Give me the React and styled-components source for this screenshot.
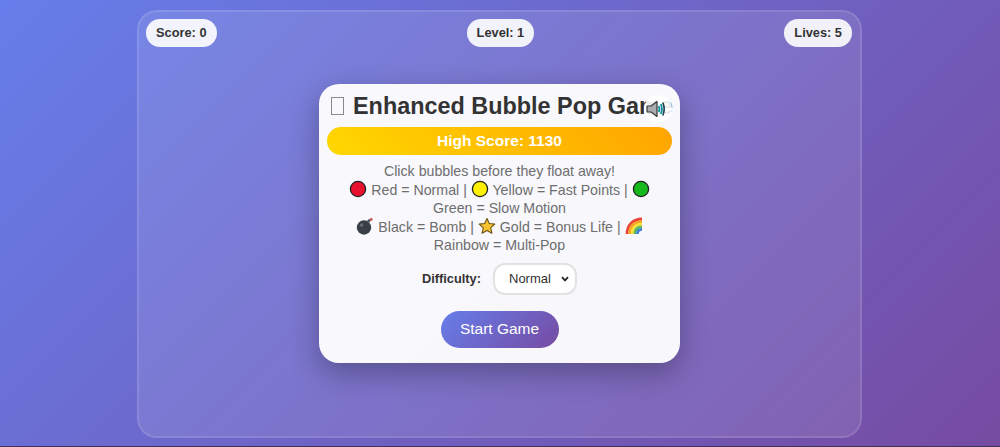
import React from "react";
import styled, { createGlobalStyle } from "styled-components";

const GlobalStyle = createGlobalStyle`
  html, body, #root {
    margin: 0;
    height: 100%;
  }
  body {
    font-family: "Liberation Sans", Arial, sans-serif;
    overflow: hidden;
  }
`;

const Page = styled.div`
  height: 447px;
  box-sizing: border-box;
  display: flex;
  justify-content: center;
  align-items: flex-start;
  padding-top: 10px;
  padding-right: 1px;
  background: linear-gradient(135deg, #667eea 0%, #764ba2 100%);
  border-bottom: 1px solid #3a3560;
`;

const GameArea = styled.div`
  position: relative;
  width: 725px;
  height: 428px;
  box-sizing: border-box;
  display: flex;
  align-items: center;
  justify-content: center;
  padding-bottom: 1px;
  background: rgba(255, 255, 255, 0.1);
  background-clip: padding-box;
  border: 2px solid rgba(255, 255, 255, 0.2);
  border-radius: 20px;
`;

const Hud = styled.div`
  position: absolute;
  top: 7px;
  left: 7px;
  right: 8px;
  display: flex;
  justify-content: space-between;
`;

const Pill = styled.div`
  padding: 7px 10px;
  height: 28px;
  box-sizing: border-box;
  background: rgba(255, 255, 255, 0.9);
  border-radius: 20px;
  font-size: 12.8px;
  line-height: 14px;
  font-weight: 700;
  color: #333;
`;

const Menu = styled.div`
  position: relative;
  width: 361px;
  height: 279px;
  box-sizing: border-box;
  padding: 8px 8px 16px;
  background: rgba(255, 255, 255, 0.95);
  border-radius: 20px;
  box-shadow: 0 10px 30px rgba(0, 0, 0, 0.3);
  text-align: center;
`;

const Title = styled.h1`
  margin: 0 0 0 4px;
  display: flex;
  align-items: center;
  gap: 9px;
  height: 28px;
  font-size: 23.4px;
  line-height: 28px;
  font-weight: 700;
  color: #333;
  white-space: nowrap;
`;

const MissingGlyph = styled.span`
  flex: none;
  width: 11px;
  height: 16px;
  border: 1px solid #8a8a8a;
`;

const SoundButton = styled.button`
  position: absolute;
  top: 11px;
  right: 8px;
  width: 28px;
  height: 28px;
  padding: 0 0 0 2px;
  display: flex;
  align-items: center;
  justify-content: flex-start;
  background: rgba(255, 255, 255, 0.9);
  border: none;
  border-radius: 50%;
`;

const HighScore = styled.div`
  margin-top: 7px;
  height: 28px;
  background: linear-gradient(45deg, #ffd700, #ffa500);
  border-radius: 20px;
  font-size: 15.5px;
  line-height: 27px;
  font-weight: 700;
  color: #fff;
`;

const Instructions = styled.p`
  margin: 7px 0 0;
  padding: 0 14px;
  font-size: 14.2px;
  line-height: 18.5px;
  color: #6e6e6e;
`;

const Glyph = styled.svg`
  width: 18px;
  height: 18px;
  margin: -3px 0;
  vertical-align: 0;
`;

const DifficultyRow = styled.div`
  margin-top: 8px;
  display: flex;
  align-items: center;
  justify-content: center;
  gap: 12px;
`;

const DifficultyLabel = styled.label`
  font-size: 12.8px;
  font-weight: 700;
  color: #333;
`;

const DifficultySelect = styled.select`
  appearance: none;
  width: 84px;
  height: 32px;
  padding: 0 0 0 14px;
  background: #fff url("data:image/svg+xml,%3Csvg xmlns='http://www.w3.org/2000/svg' width='8' height='6' viewBox='0 0 8 6'%3E%3Cpath d='M1 1.2 L4 4.4 L7 1.2' fill='none' stroke='%23222' stroke-width='1.7'/%3E%3C/svg%3E") no-repeat right 6px center;
  border: 2px solid #e2e2e2;
  border-radius: 12px;
  font-family: "Liberation Sans", Arial, sans-serif;
  font-size: 13px;
  color: #333;
`;

const StartButton = styled.button`
  display: block;
  margin: 16px auto 0;
  width: 118px;
  height: 37px;
  padding: 0;
  background: linear-gradient(135deg, #667eea, #764ba2);
  border: none;
  border-radius: 25px;
  font-family: "Liberation Sans", Arial, sans-serif;
  font-size: 15.5px;
  color: #fff;
`;

const Circle = ({ fill }) => (
  <Glyph viewBox="0 0 18 18">
    <circle cx="9" cy="9" r="7.6" fill={fill} stroke="#222" strokeWidth="1.3" />
  </Glyph>
);

const Bomb = () => (
  <Glyph viewBox="0 0 18 18">
    <circle cx="8" cy="10.5" r="7.2" fill="#3a3f45" />
    <circle cx="5.6" cy="8" r="1.8" fill="#666c73" />
    <path d="M11.8 5 L14 2.8" stroke="#55595f" strokeWidth="2.8" />
    <circle cx="15.2" cy="2.4" r="1.4" fill="#d2554a" />
  </Glyph>
);

const Star = () => (
  <Glyph viewBox="0 0 18 18">
    <path
      d="M9 1.5 L11.3 6.5 L16.8 7.1 L12.7 10.8 L13.9 16.2 L9 13.4 L4.1 16.2 L5.3 10.8 L1.2 7.1 L6.7 6.5 Z"
      fill="#f8c132"
      stroke="#6e5318"
      strokeWidth="1.1"
      strokeLinejoin="round"
    />
  </Glyph>
);

const Rainbow = () => (
  <Glyph viewBox="0 0 18 18" fill="none">
    <path d="M2 17 C2 8 8 2 17 2" stroke="#e8443a" strokeWidth="2.8" />
    <path d="M4.6 17 C4.6 9.5 9.5 4.6 17 4.6" stroke="#f5a623" strokeWidth="2.8" />
    <path d="M7.2 17 C7.2 11 11 7.2 17 7.2" stroke="#f8e036" strokeWidth="2.8" />
    <path d="M9.8 17 C9.8 12.5 12.5 9.8 17 9.8" stroke="#5cb85c" strokeWidth="2.8" />
    <path d="M12.4 17 C12.4 14 14 12.4 17 12.4" stroke="#3f7fd6" strokeWidth="2.8" />
  </Glyph>
);

const SpeakerIcon = () => (
  <svg width="20" height="20" viewBox="0 0 20 20" fill="none">
    <path d="M1 7 H5 L11 2.5 V17.5 L5 13 H1 Z" fill="#a9adaf" stroke="#3a3a3a" strokeWidth="1.2" strokeLinejoin="round" />
    <path d="M12.8 7 Q14.2 10 12.8 13" stroke="#0f8fa0" strokeWidth="1.8" />
    <path d="M14.8 5 Q17 10 14.8 15" stroke="#0f8fa0" strokeWidth="1.8" />
    <path d="M16.8 3.5 Q19.6 10 16.8 16.5" stroke="#17404f" strokeWidth="1.6" />
  </svg>
);

const App = () => {
  return (
    <Page>
      <GlobalStyle />
      <GameArea>
        <Hud>
          <Pill>Score: 0</Pill>
          <Pill>Level: 1</Pill>
          <Pill>Lives: 5</Pill>
        </Hud>
        <Menu>
          <Title>
            <MissingGlyph />
            Enhanced Bubble Pop Game
          </Title>
          <SoundButton aria-label="Toggle sound">
            <SpeakerIcon />
          </SoundButton>
          <HighScore>High Score: 1130</HighScore>
          <Instructions>
            Click bubbles before they float away!
            <br />
            <Circle fill="#e8112d" /> Red = Normal | <Circle fill="#fff000" /> Yellow = Fast Points | <Circle fill="#16b81c" /> Green = Slow Motion
            <br />
            <Bomb /> Black = Bomb | <Star /> Gold = Bonus Life | <Rainbow /> Rainbow = Multi-Pop
          </Instructions>
          <DifficultyRow>
            <DifficultyLabel htmlFor="difficulty">Difficulty:</DifficultyLabel>
            <DifficultySelect id="difficulty" defaultValue="normal">
              <option value="easy">Easy</option>
              <option value="normal">Normal</option>
              <option value="hard">Hard</option>
            </DifficultySelect>
          </DifficultyRow>
          <StartButton>Start Game</StartButton>
        </Menu>
      </GameArea>
    </Page>
  );
};

export default App;
